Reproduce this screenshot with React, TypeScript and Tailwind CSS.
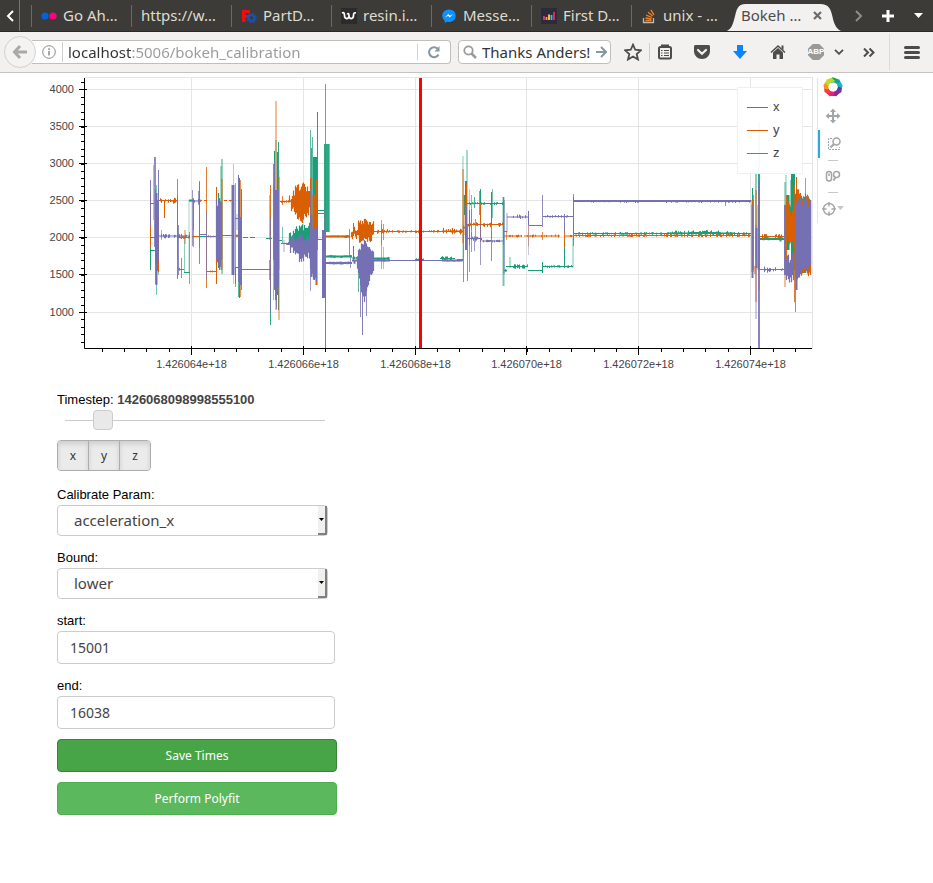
import React from "react";

const ui = "font-['Noto_Sans','Open_Sans',sans-serif]";
const helv = "font-['Liberation_Sans',Arial,sans-serif]";

/* ---------- chart ---------- */

type Run = [x1: number, x2: number, y: number, width: number, noise: number];
type Spike = [x: number, y1: number, y2: number, width: number, opacity: number];
type Band = { points: [x: number, top: number, bottom: number][]; jitter: number };
type Series = { name: string; color: string; runs: Run[]; spikes: Spike[]; bands: Band[] };

const series: Series[] = [
  {
    name: "x",
    color: "#1b9e77",
    runs: [
      [151, 155, 250.5, 1, 0], [178, 184, 237.5, 1, 0], [184, 190, 272.5, 1, 0], [189, 194, 200.5, 2, 1],
      [199, 207, 236.5, 1, 0], [214, 217, 236.5, 1, 0], [236, 240, 267.5, 1, 0], [243, 248, 237.5, 1, 0],
      [250, 255, 237.5, 1, 0], [266, 272, 238.5, 1, 0], [279, 282, 240.5, 1, 0], [318, 325, 210.5, 1, 0],
      [326, 352, 256.5, 2, 1], [352, 360, 258, 1, 1], [374, 389, 258.5, 2, 2], [391, 395, 260.5, 1, 0],
      [404, 409, 260.5, 1, 0], [415, 424, 259.5, 1, 1], [429, 434, 260.5, 1, 0], [440, 455, 258.5, 1, 2],
      [457, 463, 259.5, 1, 0], [464, 504, 203.5, 1, 1], [504, 507, 270.5, 1, 1], [506, 528, 266.5, 1, 2],
      [528, 542, 270.5, 1, 0], [543, 573, 266.5, 1, 1], [574, 751, 233.5, 1, 1], [667, 735, 233, 1, 2],
      [690, 720, 232.5, 1, 2], [760, 784, 239, 2, 2],
    ],
    spikes: [
      [150.5, 240, 270, 1, 1], [155.5, 190, 284, 1, 0.8], [156.5, 185, 295, 1, 0.6], [158.5, 190, 275, 1, 0.5],
      [177.5, 210, 260, 1, 0.6], [184.5, 238, 272, 1, 0.5], [189, 200, 272, 1, 0.4], [193.5, 201, 247, 1, 0.7],
      [199.5, 181, 264, 1, 0.8], [216.5, 187, 265, 1, 1], [218.5, 193, 268, 1, 1], [221, 166, 270, 1, 0.8],
      [222, 159, 274, 1, 0.9], [233.5, 164, 284, 1, 0.4], [238.5, 175, 297, 1, 0.7], [239.5, 178, 298, 1, 1],
      [241.5, 190, 290, 1, 0.8], [235.5, 267, 284, 1, 1], [270.5, 238, 325, 1, 0.9], [273.5, 164, 260, 1, 0.8],
      [274.5, 151, 285, 1, 1], [276, 140, 290, 1, 0.7], [277.5, 152, 295, 1, 1], [278.5, 142, 310, 1, 0.9],
      [279, 170, 270, 1, 0.5], [282.5, 227, 243, 1, 0.6], [310.5, 130, 240, 1, 0.7], [312.5, 137, 240, 1, 0.7],
      [315, 157, 240, 4, 1], [317.5, 112, 240, 1, 1], [325.5, 150, 348, 1, 0.9], [326.5, 144, 232, 5, 0.9],
      [329.5, 144, 232, 1, 0.6], [353.5, 246, 260, 1, 1], [358.5, 262, 292, 1, 0.7], [463, 156, 260, 1, 0.5],
      [464.5, 195, 215, 1, 1], [466, 181, 230, 2, 1], [467, 150, 240, 1, 0.8], [469.5, 189, 220, 1, 0.4],
      [471.5, 195, 230, 1, 0.6], [474.5, 197, 208, 1, 0.8], [479.5, 191, 215, 1, 0.7], [480.5, 189, 225, 1, 1],
      [491.5, 192, 225, 1, 1], [492.5, 189, 218, 1, 0.6], [503.5, 197, 286, 2, 0.6], [510, 257, 268, 1, 0.7],
      [542.5, 262, 273, 1, 1], [564.5, 240, 268, 1, 1], [573, 238, 268, 1, 0.6], [752.5, 188, 278, 1, 1],
      [753.5, 195, 270, 1, 0.7], [756, 160, 260, 1, 1], [759, 122, 270, 2, 0.9], [785, 182, 275, 1, 0.8],
      [786, 175, 260, 1, 0.6], [788, 195, 250, 3, 1], [793, 172, 270, 4, 1], [791, 180, 240, 2, 0.5],
    ],
    bands: [
      { points: [[289, 236, 244], [292, 233, 248], [298, 229, 250], [310, 226, 250]], jitter: 7 },
      { points: [[786, 200, 235], [790, 205, 240], [796, 196, 272], [811, 200, 273]], jitter: 6 },
    ],
  },
  {
    name: "y",
    color: "#d95f02",
    runs: [
      [151, 155, 237.5, 1, 0], [159, 177, 200.5, 1, 2], [170, 177, 201, 1, 3], [178, 189, 237.5, 1, 1],
      [192, 199, 236.5, 1, 0], [199, 202, 200.5, 1, 1], [204, 207, 200.5, 1, 0], [207, 216, 271.5, 1, 1],
      [224, 227, 200.5, 1, 0], [229, 234, 200.5, 1, 1], [235, 240, 236, 1, 1], [280, 290, 201.5, 1, 1],
      [318, 325, 213.5, 1, 0], [326, 350, 236.5, 2, 1], [374, 463, 231.5, 1, 1], [374, 388, 231.5, 1, 2],
      [442, 462, 231, 1, 3], [466, 504, 224.5, 1, 2], [504, 522, 236, 1, 1], [524, 560, 236, 1, 1],
      [564, 573, 236, 1, 1], [574, 751, 235.5, 1, 1], [665, 751, 235.5, 1, 1], [760, 784, 236.5, 1, 2],
    ],
    spikes: [
      [150.5, 190, 248, 1, 1], [155.5, 205, 265, 1, 1], [157.5, 225, 271, 1, 1], [158.5, 215, 272, 1, 1],
      [164.5, 201, 218, 1, 1], [177.5, 179, 240, 1, 0.8], [185, 230, 244, 1, 0.8], [199.5, 183, 248, 1, 0.8],
      [206.5, 167, 288, 1, 0.8], [216.5, 187, 284, 1, 1], [219.5, 200, 270, 1, 1], [222, 179, 270, 1, 0.9],
      [233.5, 190, 225, 1, 0.6], [240.5, 180, 297, 1, 0.7], [241.5, 189, 285, 1, 0.9], [270.5, 185, 290, 1, 0.9],
      [269.5, 195, 240, 1, 0.5], [273.5, 185, 300, 1, 0.6], [276, 101, 310, 1, 0.8], [279, 177, 320, 1, 0.8],
      [277.5, 190, 290, 1, 1], [282.5, 196, 205, 1, 0.8], [310.5, 178, 240, 1, 1], [311.5, 148, 260, 1, 0.9],
      [314, 195, 270, 3, 1], [316.5, 180, 285, 2, 1], [317.5, 117, 250, 1, 0.8], [325.5, 84, 300, 1, 0.8],
      [349.5, 229, 256, 1, 0.8], [353.5, 223, 236, 1, 1], [381.5, 220, 245, 1, 0.6], [383.5, 224, 240, 1, 0.7],
      [463, 169, 243, 1, 0.9], [464, 195, 235, 1, 0.7], [466.5, 184, 245, 1, 1], [469.5, 210, 245, 1, 1],
      [471.5, 209, 240, 1, 0.7], [475.5, 219, 242, 1, 0.7], [480.5, 203, 242, 1, 1], [491.5, 214, 238, 1, 0.8],
      [503.5, 197, 245, 1, 0.9], [506.5, 232, 240, 1, 0.6], [528.5, 220, 246, 1, 0.5], [542.5, 232, 240, 1, 0.7],
      [564.5, 228, 247, 1, 0.9], [573.5, 194, 246, 1, 0.8], [752.5, 200, 272, 2, 0.9], [756, 190, 302, 1, 0.9],
      [759, 195, 290, 1, 0.8], [755, 266, 274, 1, 1], [785, 205, 287, 1, 0.8], [786.5, 195, 280, 1, 0.9],
      [796.5, 177, 280, 1, 1], [794.5, 185, 302, 1, 0.8], [805.5, 178, 200, 1, 0.7],
    ],
    bands: [
      { points: [[289, 198, 204], [292, 195, 207], [296, 189, 213], [301, 187, 219], [306, 189, 213], [310, 196, 208]], jitter: 9 },
      { points: [[351, 231, 237], [357, 229, 235], [358, 222, 238], [366, 222, 239], [373, 223, 237], [374, 229, 234]], jitter: 8 },
      { points: [[787, 203, 232], [790, 217, 245], [793, 212, 240], [797, 192, 272], [800, 198, 272], [811, 202, 272]], jitter: 10 },
    ],
  },
  {
    name: "z",
    color: "#7570b3",
    runs: [
      [151, 154, 203.5, 1, 0], [159, 190, 236, 1, 2], [178, 184, 269.5, 1, 2], [192, 199, 201, 1, 2],
      [199, 207, 234.5, 1, 0], [207, 216, 236.5, 1, 1], [222, 232, 235.5, 1, 0], [235, 239, 218.5, 1, 0],
      [242, 270, 269.5, 1, 0], [281, 290, 243.5, 1, 1], [318, 325, 239.5, 1, 0], [326, 352, 263, 2, 1],
      [352, 359, 260.5, 2, 4], [374, 390, 260.5, 2, 1], [390, 463, 260.5, 1, 0], [442, 462, 260.5, 2, 1],
      [463, 466, 227.5, 1, 1], [467, 482, 238.5, 1, 2], [482, 504, 241, 1, 1], [504, 507, 231.5, 1, 0],
      [507, 528, 217, 1, 2], [529, 542, 225.5, 1, 0], [543, 573, 216.5, 1, 1], [574, 751, 201, 2, 0],
      [590, 640, 201.5, 1, 1], [665, 751, 201.5, 1, 1], [760, 784, 269.5, 1, 1], [762, 782, 269.5, 1, 3],
    ],
    spikes: [
      [150.5, 180, 226, 1, 0.9], [153.5, 165, 220, 1, 0.5], [155, 157, 247, 2, 0.8], [156.5, 193, 285, 2, 1],
      [158.5, 170, 262, 1, 0.9], [157.5, 200, 270, 1, 1], [161.5, 230, 240, 1, 0.6], [177.5, 195, 279, 1, 0.9],
      [178.5, 225, 275, 1, 0.8], [181.5, 258, 278, 1, 0.8], [189.5, 232, 284, 1, 0.7], [192.5, 190, 246, 1, 0.7],
      [193.5, 198, 230, 1, 0.8], [198.5, 191, 205, 1, 0.7], [199.5, 190, 240, 1, 0.5], [206.5, 211, 280, 1, 0.7],
      [235.5, 183, 287, 1, 0.7], [237, 214, 230, 1, 0.5], [233, 185, 275, 3, 1], [238.5, 175, 282, 1, 0.9],
      [240.5, 217, 285, 3, 1], [270.5, 217, 311, 1, 0.8], [269.5, 260, 280, 1, 0.7], [274.5, 161, 290, 1, 1],
      [276, 190, 300, 2, 1], [278, 190, 285, 2, 1], [276.5, 280, 309, 1, 0.8], [284, 240, 252, 1, 0.6],
      [310.5, 190, 291, 1, 0.7], [311.5, 215, 277, 2, 1], [325, 210, 298, 1, 1], [323.5, 230, 298, 3, 1],
      [322.5, 250, 298, 1, 0.7], [350.5, 258, 268, 1, 0.7], [360.5, 280, 317, 1, 0.8], [362.5, 280, 335, 1, 0.9],
      [366.5, 270, 316, 1, 0.8], [381.5, 224, 269, 1, 0.6], [383.5, 247, 269, 1, 0.5], [463.5, 225, 282, 1, 0.8],
      [466, 205, 250, 2, 1], [467.5, 225, 281, 1, 0.8], [469.5, 225, 272, 1, 0.7], [471.5, 232, 252, 1, 0.7],
      [474.5, 236, 251, 1, 0.7], [480.5, 223, 265, 1, 0.7], [491.5, 230, 261, 1, 0.8], [504, 200, 274, 1, 1],
      [507, 213, 232, 1, 0.7], [528.5, 211, 255, 1, 0.4], [528.5, 211, 225, 1, 1], [542.5, 195, 227, 1, 0.8],
      [564.5, 214, 232, 1, 0.9], [573.5, 197, 240, 1, 0.9], [725.5, 201, 206, 1, 0.8], [752.5, 205, 278, 2, 0.9],
      [756, 225, 319, 1, 0.7], [756.5, 228, 268, 2, 1], [758, 205, 270, 1, 0.8], [759, 181, 348, 2, 0.85],
      [785, 205, 275, 2, 0.9], [795.5, 215, 312, 1, 0.8], [796.5, 210, 290, 2, 1],
    ],
    bands: [
      { points: [[216, 200, 262], [219, 203, 262], [222, 198, 264]], jitter: 12 },
      { points: [[289, 242, 246], [293, 240, 252], [299, 239, 258], [310, 240, 254]], jitter: 9 },
      { points: [[310, 225, 270], [313, 232, 278], [317, 228, 278]], jitter: 6 },
      { points: [[357, 256, 265], [359, 249, 276], [361, 246, 290], [364, 244, 300], [367, 246, 290], [370, 250, 275], [374, 257, 265]], jitter: 7 },
      { points: [[786, 258, 276], [790, 260, 278], [794, 255, 275]], jitter: 9 },
      { points: [[795, 212, 280], [799, 202, 268], [805, 200, 266], [811, 204, 268]], jitter: 12 },
    ],
  },
];

/* Repeatable pseudo-random number in 0..1 for a sample position. */
const rand = (n: number) => {
  const v = Math.sin(n * 12.9898) * 43758.5453;
  return v - Math.floor(v);
};

const runPath = ([x1, x2, y, , noise]: Run) => {
  let d = `M${x1} ${y}H${x2}`;
  if (noise > 0) {
    for (let x = x1 + 1; x < x2; x += 1) {
      const r = rand(x * 3 + y);
      if (r > 0.55) d += `M${x + 0.5} ${y - noise * rand(x + y) - 0.5}V${y + noise * rand(x * 7 + y) + 0.5}`;
    }
  }
  return d;
};

const bandPath = ({ points, jitter }: Band) => {
  let d = "";
  for (let i = 0; i < points.length - 1; i += 1) {
    const [xa, ta, ba] = points[i];
    const [xb, tb, bb] = points[i + 1];
    for (let x = xa; x < xb; x += 1) {
      const k = (x - xa) / (xb - xa);
      const top = ta + (tb - ta) * k - (rand(x * 5 + ta) - 0.4) * jitter;
      const bottom = ba + (bb - ba) * k + (rand(x * 9 + ba) - 0.4) * jitter;
      d += `M${x + 0.5} ${top.toFixed(1)}V${bottom.toFixed(1)}`;
    }
  }
  return d;
};

const yTicks = [4000, 3500, 3000, 2500, 2000, 1500, 1000];
const yMajor = [89.5, 126.5, 163.5, 200.5, 237.5, 274.5, 312.5];
const yMinor = Array.from({ length: 36 }, (_, i) => Math.round(82 + i * 7.42) + 0.5);
const xTicks = ["64", "66", "68", "70", "72", "74"];
const xMajor = [191.5, 303.5, 415.5, 526.5, 638.5, 750.5];
const xMinor = Array.from({ length: 32 }, (_, i) => Math.floor(102.2 + i * 22.36) + 0.5);

function Chart() {
  return (
    <svg className={`block h-[307px] w-[777px] shrink-0 ${helv}`} viewBox="40 73 777 307" role="img" aria-label="Sensor readings over time">
      <g stroke="#e5e5e5" fill="none">
        <rect x="84.5" y="77.5" width="728" height="271" />
        {yMajor.map((y) => <path key={y} d={`M85 ${y}H812`} />)}
        {xMajor.map((x) => <path key={x} d={`M${x} 78V348`} />)}
      </g>
      {series.map((s) => (
        <g key={s.name} stroke={s.color} fill="none">
          {s.runs.map((r, i) => <path key={i} d={runPath(r)} strokeWidth={r[3]} />)}
          {s.bands.map((b, i) => <path key={i} d={bandPath(b)} strokeWidth="1.2" />)}
          {s.spikes.map(([x, y1, y2, w, o], i) => <path key={i} d={`M${x} ${y1}V${y2}`} strokeWidth={w} opacity={o} />)}
        </g>
      ))}
      <path d="M420.5 78V348" stroke="#ff0000" strokeWidth="3" />
      <g stroke="#000" fill="none">
        <path d="M84.5 78V348.5H812" />
        {yMajor.map((y) => <path key={y} d={`M79 ${y}H87`} />)}
        {yMinor.map((y) => <path key={y} d={`M81 ${y}H84`} />)}
        {xMajor.map((x) => <path key={x} d={`M${x} 346V355`} />)}
        {xMinor.map((x) => <path key={x} d={`M${x} 348V352`} />)}
      </g>
      <g fill="#444" fontSize="11">
        {yTicks.map((t, i) => <text key={t} x="74" y={yMajor[i] + 3.5} textAnchor="end">{t}</text>)}
        {xTicks.map((t, i) => <text key={t} x={xMajor[i]} y="368" textAnchor="middle">{`1.4260${t}e+18`}</text>)}
      </g>
      <rect x="737.5" y="87.5" width="65" height="86" fill="#fff" fillOpacity="0.95" stroke="#f0f0f0" />
      {series.map((s, i) => (
        <g key={s.name}>
          <path d={`M747 ${107.5 + i * 23}H768`} stroke={s.color} />
          <text x="773" y={111 + i * 23} fontSize="13" fill="#444">{s.name}</text>
        </g>
      ))}
    </svg>
  );
}

/* ---------- plot toolbar ---------- */

function BokehLogo() {
  const colors = ["#00a650", "#00a99d", "#27a9e1", "#5b3f98", "#93278f", "#ed1e79", "#f1403c", "#f7941e", "#c5d92d"];
  return (
    <svg className="h-5 w-5" viewBox="-10 -10 20 20">
      {colors.map((c, i) => (
        <path key={c} d="M-3.5 -8L0 -9.800L5 -7.500L5.500 -3L2 -4.800L-3 -4.300Z" fill={c} transform={`rotate(${i * 40})`} />
      ))}
    </svg>
  );
}

function PlotToolbar() {
  const tool = "flex h-7 w-full items-center justify-center";
  return (
    <div className="mt-[5px] flex h-[145px] w-[31px] flex-col items-center border-l border-[#e5e5e5]">
      <a href="#bokeh" aria-label="Bokeh" className="-mt-px mb-[5px] block"><BokehLogo /></a>
      <button aria-label="Pan" className={tool}>
        <svg className="h-4 w-4" viewBox="0 0 16 16" fill="none" stroke="#a1a6a9" strokeWidth="2">
          <path d="M8 2V14M2 8H14" />
          <path d="M8 .5L11 4H5ZM8 15.500L11 12H5ZM.5 8L4 5V11ZM15.500 8L12 5V11Z" fill="#a1a6a9" stroke="none" />
        </svg>
      </button>
      <button aria-label="Box zoom" className={`${tool} border-l-2 border-[#26aae1]`}>
        <svg className="h-4 w-4" viewBox="0 0 16 16" fill="none" stroke="#a1a6a9">
          <path d="M6 2.500H2.500V13.500H13.500V11" strokeDasharray="2 1" />
          <circle cx="10.500" cy="5.500" r="3.500" strokeWidth="1.500" />
          <path d="M8 8L4.500 11.500" strokeWidth="2.200" />
        </svg>
      </button>
      <hr className="my-[2px] w-[10px] border-[#c8c8c8]" />
      <button aria-label="Wheel zoom" className={tool}>
        <svg className="h-4 w-4" viewBox="0 0 16 16" fill="none" stroke="#a1a6a9" strokeWidth="1.500">
          <rect x="1.500" y="3.500" width="5" height="9.500" rx="2.500" />
          <path d="M4 5.500V8" />
          <circle cx="11.500" cy="6.500" r="3" />
          <path d="M10.500 9.300L8.500 12.500" strokeWidth="2" />
        </svg>
      </button>
      <hr className="my-[2px] w-[10px] border-[#c8c8c8]" />
      <button aria-label="Inspect tools" className={tool}>
        <svg className="h-4 w-6" viewBox="0 0 24 16" fill="none" stroke="#a1a6a9" strokeWidth="1.400">
          <circle cx="8" cy="8" r="5.500" />
          <path d="M8 1V5.500M8 10.500V15M1 8H5.500M10.500 8H15" />
          <path d="M16 5H23L19.500 9Z" fill="#c5c8ca" stroke="none" />
        </svg>
      </button>
    </div>
  );
}

/* ---------- browser chrome ---------- */

function TabIcon({ kind }: { kind: string }) {
  const box = "h-4 w-4 shrink-0";
  if (kind === "flickr")
    return (
      <svg className={box} viewBox="0 0 16 16"><circle cx="4" cy="8" r="3.600" fill="#0063dc" /><circle cx="12" cy="8" r="3.600" fill="#ff0084" /></svg>
    );
  if (kind === "freecad")
    return (
      <svg className={box} viewBox="0 0 16 16">
        <path d="M1 2H9V5H4.500V7H8V10H4.500V14H1Z" fill="#f00d0d" />
        <circle cx="10.500" cy="10" r="2.800" fill="none" stroke="#1c4fc4" strokeWidth="1.800" />
        <circle cx="10.500" cy="10" r="4.400" fill="none" stroke="#1c4fc4" strokeWidth="1.600" strokeDasharray="1.800 1.656" />
      </svg>
    );
  if (kind === "resin")
    return (
      <svg className={box} viewBox="0 0 16 16">
        <rect width="16" height="16" fill="#2b2b2b" />
        <path d="M1 5C3 4 3.500 5.500 3.500 7.500C3.500 11.500 8 11.500 8 8C8 5 6.500 5 6.500 6.500M8 8C8 11.500 12.500 11.500 12.500 7.500C12.500 5.500 13 4.500 15 5" fill="none" stroke="#fff" strokeWidth="1.700" />
      </svg>
    );
  if (kind === "messenger")
    return (
      <svg className={box} viewBox="0 0 16 16">
        <path d="M8 1.500C4 1.500 1.300 4.300 1.300 7.700C1.300 9.700 2.200 11.400 3.700 12.500V15L6 13.700C6.600 13.900 7.300 14 8 14C12 14 14.700 11.200 14.700 7.700C14.700 4.300 12 1.500 8 1.500Z" fill="#0a93ff" />
        <path d="M4 9.500L7.200 6L9 7.800L12 6L8.800 9.500L7 7.700Z" fill="#fff" />
      </svg>
    );
  if (kind === "data")
    return (
      <svg className={box} viewBox="0 0 16 16">
        <rect width="16" height="16" fill="#2c2b3c" />
        <g strokeWidth="1.800"><path d="M3 8V12" stroke="#e0338a" /><path d="M5.500 9V12" stroke="#f9a11b" /><path d="M8 6.500V12" stroke="#f7d64a" /><path d="M10.500 7V12" stroke="#4bb5e8" /><path d="M13 4V12" stroke="#d8365f" /></g>
      </svg>
    );
  return (
    <svg className={box} viewBox="0 0 16 16" fill="none">
      <path d="M2.500 10V14.500H12.500V10" stroke="#bcbbbb" strokeWidth="1.300" />
      <g stroke="#f48024" strokeWidth="1.300"><path d="M4.500 12.500H10.500M4.500 10L10.500 11M5.200 7.200L10.900 9.500M7 4.300L11.700 8M9.800 1.800L13 6.800" /></g>
    </svg>
  );
}

const tabs = [
  { icon: "flickr", title: "Go Ah…" },
  { icon: "", title: "https://w…" },
  { icon: "freecad", title: "PartD…" },
  { icon: "resin", title: "resin.i…" },
  { icon: "messenger", title: "Messe…" },
  { icon: "data", title: "First D…" },
  { icon: "stack", title: "unix - …" },
];

function TabBar() {
  return (
    <div className="flex h-8 items-stretch overflow-hidden border-b border-[#2a2925] bg-[#3c3b37] text-[15px] text-[#dfdbd2]">
      <button aria-label="Scroll tabs left" className="flex w-5 shrink-0 items-center justify-center border-r border-[#77756f]">
        <svg className="h-3 w-2" viewBox="0 0 8 12" fill="none" stroke="#fff" strokeWidth="2"><path d="M7 1L2 6L7 11" /></svg>
      </button>
      <div className="w-[11px] shrink-0" />
      {tabs.map((t) => (
        <button key={t.title} className="flex w-[100px] min-w-0 shrink items-center py-[7px]">
          <span className="flex h-[22px] w-full items-center gap-[6px] overflow-hidden whitespace-nowrap border-l border-[#6b6a65] pl-[9px]">
            {t.icon && <TabIcon kind={t.icon} />}
            <span>{t.title}</span>
          </span>
        </button>
      ))}
      <div className="relative flex w-[102px] shrink-0 items-center justify-between pl-[10px] pr-[11px] text-[#4c4c4c]">
        <svg className="absolute -left-2 top-0 h-8 w-[122px]" viewBox="0 0 122 32">
          <path d="M0 32C7 31 9 27 11 20C14 9 14 4 23 4H97C106 4 108 9 110 19C112 27 115 31 122 32Z" fill="#f2f1f0" />
        </svg>
        <span className="relative">Bokeh …</span>
        <button aria-label="Close tab" className="relative">
          <svg className="h-[9px] w-[9px]" viewBox="0 0 9 9" stroke="#6b6b6b" strokeWidth="2.200"><path d="M1 1L8 8M8 1L1 8" /></svg>
        </button>
      </div>
      <div className="ml-auto flex shrink-0 items-center">
        <button aria-label="Scroll tabs right" className="flex w-7 justify-center">
          <svg className="h-3 w-2" viewBox="0 0 8 12" fill="none" stroke="#8f8d86" strokeWidth="2"><path d="M1 1L6 6L1 11" /></svg>
        </button>
        <button aria-label="New tab" className="flex w-[30px] justify-center">
          <svg className="h-3 w-3" viewBox="0 0 12 12" stroke="#fff" strokeWidth="3"><path d="M6 0V12M0 6H12" /></svg>
        </button>
        <button aria-label="List all tabs" className="flex w-[30px] justify-center">
          <svg className="h-[5px] w-[9px]" viewBox="0 0 9 5"><path d="M0 0H9L4.500 5Z" fill="#fff" /></svg>
        </button>
      </div>
    </div>
  );
}

function NavBar() {
  const btn = "flex h-8 shrink-0 items-center justify-center";
  return (
    <div className="flex h-[41px] items-center border-b border-[#c6c4c1] bg-[#f2f1f0] text-[15px] text-[#333]">
      <button aria-label="Back" className="relative ml-1 flex h-8 w-8 shrink-0 items-center justify-center rounded-full border border-[#d4d2cf] bg-[#f4f3f2]">
        <svg className="h-4 w-4" viewBox="0 0 16 16" fill="none" stroke="#aaa9a7" strokeWidth="3"><path d="M8 2L2.500 8L8 14M3 8H15" /></svg>
      </button>
      <div className="-ml-1 flex h-6 min-w-0 flex-1 items-center rounded-r-sm border border-l-0 border-[#c2bfbb] bg-white">
        <svg className="ml-[10px] h-[14px] w-[14px] shrink-0" viewBox="0 0 14 14" fill="none" stroke="#8a8a8a">
          <circle cx="7" cy="7" r="6.300" /><path d="M7 6V10.500M7 3.300V5" strokeWidth="1.500" />
        </svg>
        <div className="ml-[6px] h-5 w-px shrink-0 bg-[#cfcfcf]" />
        <input
          aria-label="Address"
          defaultValue="localhost:5006/bokeh_calibration"
          className="ml-[5px] min-w-0 flex-1 bg-linear-to-r from-[#333] from-[64px] to-[#999] to-[64px] bg-clip-text text-transparent outline-none"
        />
        <div className="h-4 w-px shrink-0 bg-[#cfcfcf]" />
        <button aria-label="Reload" className="flex w-8 shrink-0 justify-center">
          <svg className="h-[14px] w-[14px]" viewBox="0 0 14 14" fill="none" stroke="#8696a3" strokeWidth="2"><path d="M11.500 9.500A5 5 0 1 1 10.500 3.500" /><path d="M12.500 1V6.500H7.500Z" fill="#8696a3" stroke="none" /></svg>
        </button>
      </div>
      <div className="ml-[7px] flex h-6 w-[153px] shrink-0 items-center rounded-sm border border-[#c2bfbb] bg-white">
        <svg className="ml-1 h-[14px] w-[14px] shrink-0" viewBox="0 0 14 14" fill="none" stroke="#999" strokeWidth="1.800"><circle cx="5.500" cy="5.500" r="4.200" /><path d="M8.500 8.500L13 13" strokeWidth="2.500" /></svg>
        <input aria-label="Search" defaultValue="Thanks Anders!" className="ml-[5px] w-0 min-w-0 flex-1 bg-transparent outline-none" />
        <button aria-label="Go" className="mr-[3px]">
          <svg className="h-3 w-[11px]" viewBox="0 0 11 12" fill="none" stroke="#8696a3" strokeWidth="2"><path d="M0 6H9M5 1L10 6L5 11" /></svg>
        </button>
      </div>
      <button aria-label="Bookmark this page" className={`${btn} ml-[6px] w-8`}>
        <svg className="h-[18px] w-[18px]" viewBox="0 0 16 16" fill="none" stroke="#4c4c4c" strokeWidth="1.600"><path d="M8 1.500L10 6L15 6.500L11.300 9.800L12.400 14.600L8 12L3.600 14.600L4.700 9.800L1 6.500L6 6Z" /></svg>
      </button>
      <div className="h-[18px] w-px shrink-0 bg-[#d0cecb]" />
      <button aria-label="Bookmarks menu" className={`${btn} w-[30px]`}>
        <svg className="h-4 w-4" viewBox="0 0 16 16" fill="none" stroke="#4c4c4c"><rect x="2" y="3" width="12" height="11.500" rx="1.500" strokeWidth="2" /><path d="M5 1.500H11V3H5Z" strokeWidth="2" /><path d="M4 6.500H5.500M7 6.500H12M4 9H5.500M7 9H12M4 11.500H5.500M7 11.500H12" strokeWidth="1.200" /></svg>
      </button>
      <button aria-label="Save to Pocket" className={`${btn} w-[44px]`}>
        <svg className="h-4 w-4" viewBox="0 0 16 16"><path d="M1.500 1H14.500C15.300 1 16 1.600 16 2.500V7C16 11.500 12.500 15 8 15C3.500 15 0 11.500 0 7V2.500C0 1.600 .7 1 1.500 1Z" fill="#4c4c4c" /><path d="M4 6L8 9.800L12 6" fill="none" stroke="#f2f1f0" strokeWidth="2.200" strokeLinecap="round" /></svg>
      </button>
      <button aria-label="Downloads" className={`${btn} w-8`}>
        <svg className="h-4 w-4" viewBox="0 0 16 16"><path d="M5 1H11V7H15L8 15L1 7H5Z" fill="#0a84ff" /></svg>
      </button>
      <button aria-label="Home" className={`${btn} w-[44px]`}>
        <svg className="h-4 w-4" viewBox="0 0 16 16"><path d="M3 8.500L8 4L13 8.500V15H9.500V10.500H6.500V15H3Z" fill="#4c4c4c" /><path d="M1 8.500L8 2L15 8.500" fill="none" stroke="#4c4c4c" strokeWidth="1.500" /><path d="M11.500 1.500H13.500V6L11.500 4.200Z" fill="#4c4c4c" /></svg>
      </button>
      <button aria-label="Adblock Plus" className={`${btn} w-8`}>
        <span className={`flex h-4 w-4 items-center justify-center bg-[#999] text-[8px] font-bold leading-none text-white [clip-path:polygon(30%_0,70%_0,100%_30%,100%_70%,70%_100%,30%_100%,0_70%,0_30%)] ${helv}`}>ABP</span>
      </button>
      <button aria-label="Adblock menu" className={`${btn} w-[14px]`}>
        <svg className="h-[6px] w-[10px]" viewBox="0 0 10 6" fill="none" stroke="#4c4c4c" strokeWidth="1.800"><path d="M1 .8L5 4.800L9 .8" /></svg>
      </button>
      <button aria-label="More tools" className={`${btn} ml-[3px] w-10`}>
        <svg className="h-[9px] w-3" viewBox="0 0 12 9" fill="none" stroke="#4c4c4c" strokeWidth="2"><path d="M1 .5L5 4.500L1 8.500M6.500 .5L10.500 4.500L6.500 8.500" /></svg>
      </button>
      <div className="h-9 w-px shrink-0 bg-[#dcdad7]" />
      <button aria-label="Open menu" className={`${btn} w-[43px]`}>
        <svg className="h-[13px] w-4" viewBox="0 0 16 13" stroke="#4c4c4c" strokeWidth="3" strokeLinecap="round"><path d="M1.500 1.500H14.500M1.500 6.500H14.500M1.500 11.500H14.500" /></svg>
      </button>
    </div>
  );
}

/* ---------- widgets ---------- */

function Label({ htmlFor, children }: { htmlFor: string; children: React.ReactNode }) {
  return <label htmlFor={htmlFor} className={`mb-px block text-[13px] leading-[18px] text-black ${helv}`}>{children}</label>;
}

function SelectField({ id, label, value, options }: { id: string; label: string; value: string; options: string[] }) {
  return (
    <div>
      <Label htmlFor={id}>{label}</Label>
      <div className="relative w-[271px]">
        <select id={id} defaultValue={value} className="block h-[31px] w-full appearance-none rounded border border-[#ccc] bg-white pl-4 pr-3 text-[15px] text-[#444]">
          {options.map((o) => <option key={o}>{o}</option>)}
        </select>
        <span className="pointer-events-none absolute bottom-px right-px top-px flex w-[9px] items-center justify-center border-b-2 border-r-2 border-[#808080] bg-[#f0f0ee]">
          <svg className="h-[3px] w-[5px]" viewBox="0 0 5 3"><path d="M0 0H5L2.500 3Z" /></svg>
        </span>
      </div>
    </div>
  );
}

function TextField({ id, label, value }: { id: string; label: string; value: string }) {
  return (
    <div>
      <Label htmlFor={id}>{label}</Label>
      <input id={id} defaultValue={value} className="block h-[33px] w-[278px] rounded border border-[#ccc] bg-white px-3 text-[14px] text-[#444]" />
    </div>
  );
}

export default function App() {
  return (
    <div className={`min-h-screen bg-white ${ui}`}>
      <header>
        <TabBar />
        <NavBar />
      </header>
      <main>
        <section className="flex items-start pl-10">
          <Chart />
          <PlotToolbar />
        </section>
        <section className="w-[337px] pb-6 pl-[57px] pt-[11px]">
          <label htmlFor="timestep" className={`block whitespace-nowrap text-[13px] leading-[18px] text-black ${helv}`}>
            Timestep: <b className="text-[#444]">1426068098998555100</b>
          </label>
          <input
            id="timestep"
            type="range"
            min={0}
            max={240}
            defaultValue={28}
            className="ml-2 mt-px block h-5 w-[260px] appearance-none bg-transparent [&::-webkit-slider-runnable-track]:h-5 [&::-webkit-slider-runnable-track]:bg-[linear-gradient(#ccc,#ccc)] [&::-webkit-slider-runnable-track]:bg-[length:100%_1px] [&::-webkit-slider-runnable-track]:bg-center [&::-webkit-slider-runnable-track]:bg-no-repeat [&::-webkit-slider-thumb]:h-5 [&::-webkit-slider-thumb]:w-5 [&::-webkit-slider-thumb]:appearance-none [&::-webkit-slider-thumb]:rounded [&::-webkit-slider-thumb]:border [&::-webkit-slider-thumb]:border-[#ccc] [&::-webkit-slider-thumb]:bg-[#e9e9e9]"
          />
          <div className="mt-[10px] flex w-[94px] overflow-hidden rounded border border-[#adadad]">
            {["x", "y", "z"].map((n) => (
              <button key={n} aria-pressed="true" className="h-[29px] flex-1 border-l border-[#adadad] bg-[#ebebeb] text-[12px] text-[#333] shadow-[inset_0_3px_5px_rgba(0,0,0,0.125)] first:border-l-0">{n}</button>
            ))}
          </div>
          <div className="mt-[15px] flex flex-col gap-[13px]">
            <SelectField id="param" label="Calibrate Param:" value="acceleration_x" options={["acceleration_x", "acceleration_y", "acceleration_z"]} />
            <SelectField id="bound" label="Bound:" value="lower" options={["lower", "upper"]} />
            <TextField id="start" label="start:" value="15001" />
            <TextField id="end" label="end:" value="16038" />
          </div>
          <button className="mt-[10px] block h-[33px] w-full rounded border border-[#398439] bg-[#47a447] text-[12px] text-white">Save Times</button>
          <button className="mt-[10px] block h-[33px] w-full rounded border border-[#4cae4c] bg-[#5cb85c] text-[12px] text-white">Perform Polyfit</button>
        </section>
      </main>
    </div>
  );
}
